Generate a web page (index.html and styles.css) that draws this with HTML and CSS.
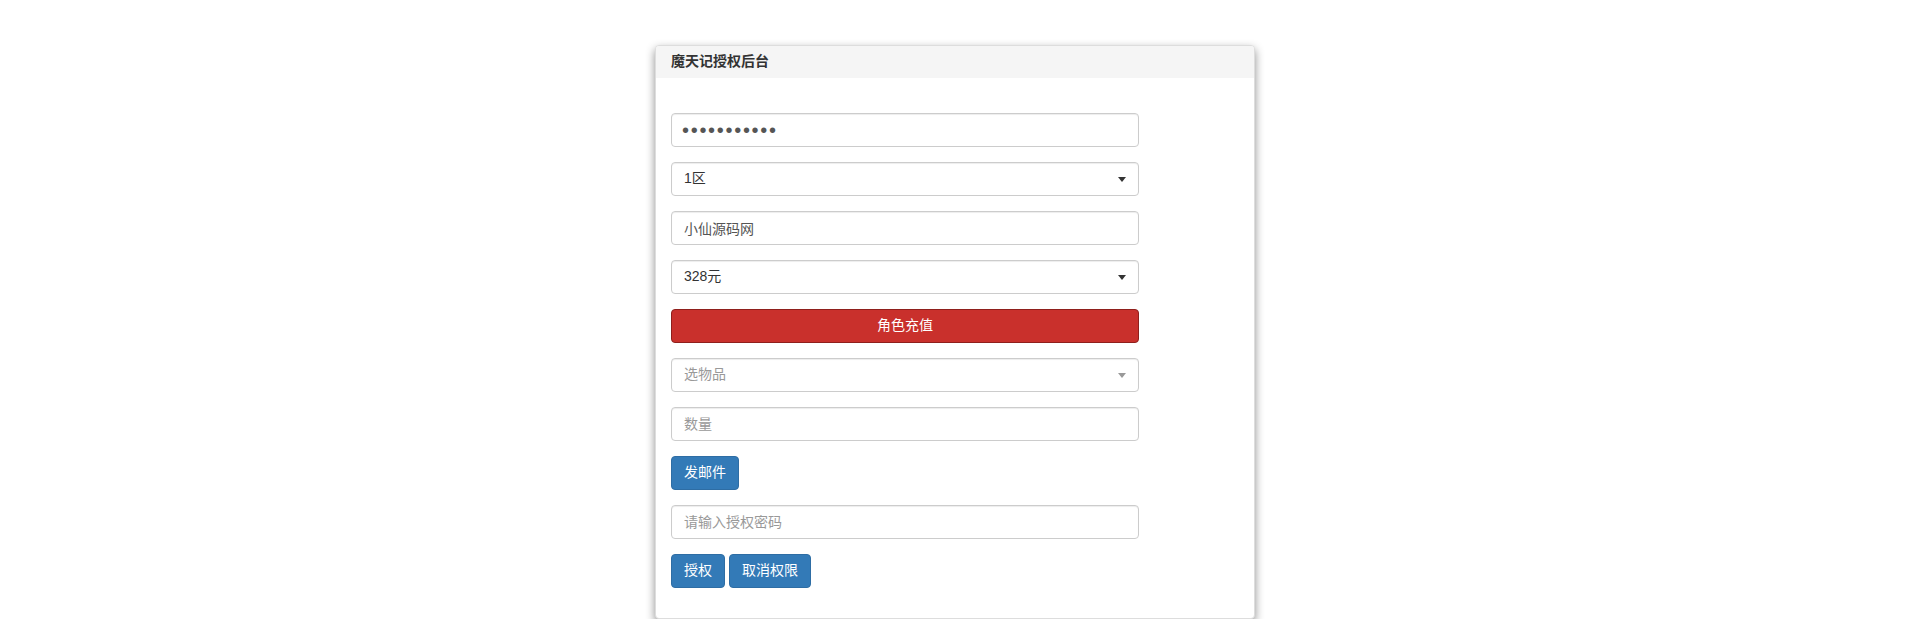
FILE: index.html
```html
<!DOCTYPE html>
<html lang="zh-CN">

<head>
    <meta charset="UTF-8">
    <meta name="viewport" content="width=device-width, initial-scale=1.0">
    <title>魔天记授权后台</title>
    <link rel="stylesheet" href="styles.css">
</head>

<body>
    <div class="panel">
        <div class="panel-heading">魔天记授权后台</div>
        <div class="panel-body">
            <form class="gm-form">
                <div class="form-group">
                    <input type="password" class="form-control pwd" value="12345678901">
                </div>
                <div class="form-group select-wrap">
                    <select class="form-control">
                        <option>1区</option>
                        <option>2区</option>
                    </select>
                </div>
                <div class="form-group">
                    <input type="text" class="form-control" value="小仙源码网">
                </div>
                <div class="form-group select-wrap">
                    <select class="form-control">
                        <option>328元</option>
                        <option>648元</option>
                    </select>
                </div>
                <div class="form-group">
                    <button type="button" class="btn btn-danger btn-block">角色充值</button>
                </div>
                <div class="form-group select-wrap muted">
                    <select class="form-control">
                        <option>选物品</option>
                    </select>
                </div>
                <div class="form-group">
                    <input type="text" class="form-control" placeholder="数量">
                </div>
                <div class="form-group">
                    <button type="button" class="btn btn-primary">发邮件</button>
                </div>
                <div class="form-group">
                    <input type="text" class="form-control" placeholder="请输入授权密码">
                </div>
                <div class="form-group">
                    <button type="button" class="btn btn-primary">授权</button>
                    <button type="button" class="btn btn-primary">取消权限</button>
                </div>
            </form>
        </div>
    </div>
</body>

</html>
```

FILE: styles.css
```css
* {
    box-sizing: border-box;
}

body {
    margin: 0;
    padding: 45px 0 0;
    background-color: #fff;
    font-family: "Liberation Sans", "Noto Sans CJK SC", sans-serif;
    font-size: 14px;
    line-height: 1.42857;
    color: #333;
}

.panel {
    width: 600px;
    margin: 0 auto;
    background-color: #fff;
    border: 1px solid #ddd;
    border-radius: 4px;
    box-shadow: 0 4px 10px rgba(0, 0, 0, 0.45);
    overflow: hidden;
}

.panel-heading {
    height: 32px;
    padding: 6px 15px;
    background-color: #f5f5f5;
    font-weight: bold;
    color: #333;
}

.panel-body {
    padding: 35px 15px 15px;
}

.gm-form {
    width: 468px;
}

.form-group {
    margin-bottom: 15px;
}

.form-control {
    display: block;
    width: 100%;
    height: 34px;
    padding: 6px 12px;
    font-family: inherit;
    font-size: 14px;
    line-height: 1.42857;
    color: #555;
    background-color: #fff;
    border: 1px solid #ccc;
    border-radius: 4px;
    box-shadow: inset 0 1px 1px rgba(0, 0, 0, 0.075);
    outline: none;
}

.form-control::placeholder {
    color: #999;
}

.form-control.pwd {
    padding: 0 10px;
    font-size: 20px;
    letter-spacing: 1.7px;
    color: #555;
}

.select-wrap {
    position: relative;
}

.select-wrap select {
    appearance: none;
    -webkit-appearance: none;
    color: #333;
    padding-right: 30px;
}

.select-wrap::after {
    content: "";
    position: absolute;
    right: 13px;
    top: 15px;
    border-left: 4px solid transparent;
    border-right: 4px solid transparent;
    border-top: 5px solid #333;
    pointer-events: none;
}

.select-wrap.muted select {
    color: #999;
}

.select-wrap.muted::after {
    border-top-color: #999;
}

.btn {
    display: inline-block;
    height: 34px;
    padding: 6px 12px;
    font-family: inherit;
    font-size: 14px;
    line-height: 1.42857;
    color: #fff;
    border: 1px solid transparent;
    border-radius: 4px;
    cursor: pointer;
}

.btn-primary {
    background-color: #337ab7;
    border-color: #2e6da4;
}

.btn-danger {
    background-color: #c9302c;
    border-color: #8f1f1c;
}

.btn-block {
    display: block;
    width: 100%;
}
```
